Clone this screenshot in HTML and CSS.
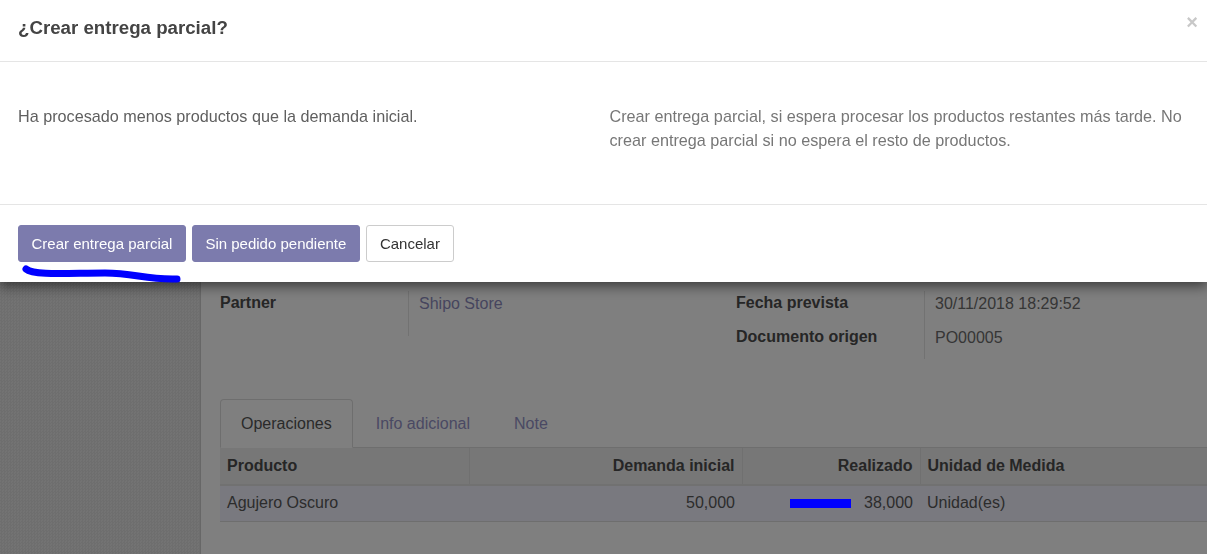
FILE: index.html
```html
<!DOCTYPE html>
<html lang="es">
<head>
<meta charset="utf-8">
<title>¿Crear entrega parcial?</title>
<link rel="stylesheet" href="styles.css">
</head>
<body>
<div class="app">
  <aside class="sidebar"></aside>
  <main class="main">
    <div class="sheet">
      <div class="groups">
        <div class="group">
          <div class="label">Partner</div>
          <div class="value value-tall link">Shipo Store</div>
        </div>
        <div class="group">
          <div class="label">Fecha prevista</div>
          <div class="value">30/11/2018 18:29:52</div>
          <div class="label">Documento origen</div>
          <div class="value">PO00005</div>
        </div>
      </div>

      <div class="tabs">
        <div class="tab active">Operaciones</div>
        <div class="tab">Info adicional</div>
        <div class="tab">Note</div>
      </div>
      <table class="lines">
        <thead>
          <tr>
            <th class="c-prod">Producto</th>
            <th class="c-dem num">Demanda inicial</th>
            <th class="c-real num">Realizado</th>
            <th class="c-uom">Unidad de Medida</th>
          </tr>
        </thead>
        <tbody>
          <tr>
            <td>Agujero Oscuro</td>
            <td class="num">50,000</td>
            <td class="num">38,000</td>
            <td>Unidad(es)</td>
          </tr>
        </tbody>
      </table>
    </div>
  </main>
</div>

<div class="backdrop"></div>

<div class="modal">
  <header class="modal-header">
    <h4 class="modal-title">¿Crear entrega parcial?</h4>
    <span class="close">×</span>
  </header>
  <section class="modal-body">
    <p>Ha procesado menos productos que la demanda inicial.</p>
    <p class="muted">Crear entrega parcial, si espera procesar los productos restantes más tarde. No crear entrega parcial si no espera el resto de productos.</p>
  </section>
  <footer class="modal-footer">
    <button class="btn btn-primary">Crear entrega parcial</button>
    <button class="btn btn-primary">Sin pedido pendiente</button>
    <button class="btn btn-default">Cancelar</button>
  </footer>
</div>

<svg class="mark-squiggle" width="200" height="30" viewBox="0 0 200 30" aria-hidden="true">
  <path d="M26 9 C 34 16, 70 13, 105 13 C 135 13, 145 20, 177 19" fill="none" stroke="#0000ff" stroke-width="7" stroke-linecap="round"/>
</svg>
<div class="mark-bar"></div>
</body>
</html>
```

FILE: styles.css
```css
* { box-sizing: border-box; }

html, body {
  margin: 0;
  height: 100%;
  overflow: hidden;
}

body {
  font-family: "Liberation Sans", Arial, sans-serif;
  font-size: 16px;
  color: #4c4c4c;
  background: #fff;
}

/* ---------- page behind the dialog ---------- */
.app {
  display: flex;
  height: 100%;
}

.sidebar {
  width: 201px;
  flex: none;
  border-right: 1px solid #cfcfcf;
  background-color: #e2e2e2;
  background-image: repeating-conic-gradient(#dcdcdc 0 25%, #e6e6e6 0 50%);
  background-size: 3px 3px;
}

.main {
  flex: 1;
  min-width: 0;
  overflow: hidden;
  background: #fff;
}

.sheet {
  padding: 291px 0 0 19px;
  width: 1100px;
}

.groups {
  display: flex;
}

.group {
  width: 516px;
  display: grid;
  grid-template-columns: 188px 1fr;
  align-content: start;
}

.label {
  font-weight: bold;
  line-height: 22px;
  padding: 1px 0 11px;
  color: #4c4c4c;
}

.value {
  border-left: 1px solid #e4e4e4;
  padding: 2px 0 10px 10px;
  line-height: 22px;
  color: #6c6c6c;
}

.value-tall { min-height: 45px; }

.link { color: #8d8bbd; }

/* tabs */
.tabs {
  display: flex;
  margin-top: 40px;
  border-bottom: 1px solid #dcdcdc;
  height: 49px;
}

.tab {
  padding: 0 20px;
  margin-right: 2px;
  line-height: 48px;
  color: #9593c7;
  border: 1px solid transparent;
  border-radius: 4px 4px 0 0;
}

.tab.active {
  color: #555;
  background: #fff;
  border-color: #ddd;
  border-bottom-color: #fff;
  height: 49px;
}

/* table */
.lines {
  border-collapse: collapse;
  table-layout: fixed;
  width: 1000px;
}

.lines th, .lines td {
  padding: 0 7px;
  text-align: left;
  white-space: nowrap;
}

.lines th {
  height: 37px;
  background: #eeeeee;
  font-weight: bold;
  color: #4c4c4c;
  border-right: 1px solid #e0e0e0;
  border-bottom: 2px solid #e2e2e2;
}

.lines td {
  height: 36px;
  background: #f2f2fe;
  color: #595959;
  border-bottom: 1px solid #dcdcdc;
}

.lines .num { text-align: right; }

.c-prod { width: 249px; }
.c-dem { width: 273px; }
.c-real { width: 178px; }
.c-uom { width: 300px; }

/* ---------- dim backdrop ---------- */
.backdrop {
  position: fixed;
  inset: 0;
  background: rgba(0, 0, 0, 0.5);
  z-index: 10;
}

/* ---------- modal dialog ---------- */
.modal {
  position: fixed;
  top: 0;
  left: 0;
  right: 0;
  z-index: 20;
  background: #fff;
  box-shadow: 0 4px 12px rgba(0, 0, 0, 0.55);
}

.modal-header {
  display: flex;
  justify-content: space-between;
  align-items: flex-start;
  padding: 0 9px 0 18px;
  height: 62px;
  border-bottom: 1px solid #e5e5e5;
}

.modal-title {
  margin: 0;
  padding-top: 17px;
  font-size: 18.7px;
  line-height: 22px;
  font-weight: bold;
  color: #444;
}

.close {
  margin-top: 10px;
  font-size: 20px;
  font-weight: bold;
  line-height: 24px;
  color: #c8c8c8;
}

.modal-body {
  display: grid;
  grid-template-columns: 1fr 1fr;
  column-gap: 12px;
  padding: 42px 18px 52px;
  height: 142px;
}

.modal-body p {
  margin: 0;
  line-height: 24px;
  font-size: 16.2px;
  color: #5f5f5f;
}

.modal-body .muted { color: #777; }

.modal-footer {
  display: flex;
  gap: 6px;
  padding: 20px 18px;
  height: 78px;
  border-top: 1px solid #e5e5e5;
}

.btn {
  font-family: "Liberation Sans", Arial, sans-serif;
  font-size: 15px;
  height: 37px;
  padding: 0 12.5px;
  border-radius: 3px;
  border: 1px solid transparent;
  cursor: pointer;
}

.btn-primary {
  background: #7c7bad;
  border-color: #7c7bad;
  color: #fff;
}

.btn-default {
  background: #fff;
  border-color: #ccc;
  color: #333;
  padding: 0 13px;
}

/* ---------- hand-drawn annotations ---------- */
.mark-squiggle {
  position: fixed;
  left: 0;
  top: 260px;
  z-index: 30;
}

.mark-bar {
  position: fixed;
  left: 790px;
  top: 499px;
  width: 61px;
  height: 9px;
  background: #0000ff;
  z-index: 30;
}
```
